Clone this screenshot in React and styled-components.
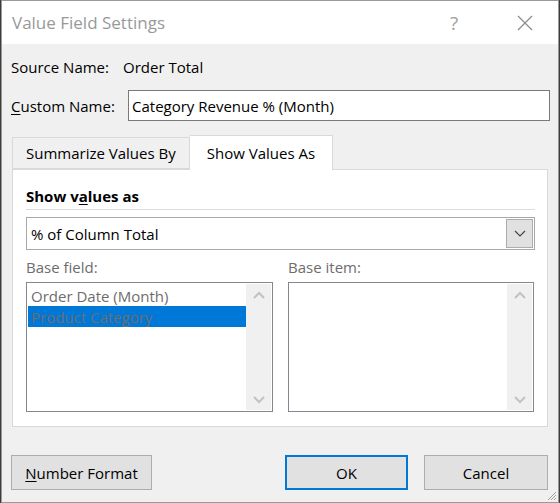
import styled, { createGlobalStyle } from "styled-components";

const GlobalStyle = createGlobalStyle`
  html, body {
    margin: 0;
    padding: 0;
    background: #3c3c3c;
  }
  body {
    font-family: "Open Sans", "Noto Sans", sans-serif;
    font-size: 15px;
    color: #000;
  }
`;

const Window = styled.div`
  box-sizing: border-box;
  margin-left: 1px;
  width: 558px;
  height: 503px;
  border: 1px solid #9a9a9a;
  background: #f0f0f0;
  display: flex;
  flex-direction: column;
  position: relative;
`;

const TitleBar = styled.div`
  height: 43px;
  background: #fff;
  display: flex;
  align-items: center;
  padding-left: 10px;
`;

const Title = styled.div`
  flex: 1;
  font-size: 17px;
  color: #999;
  padding-bottom: 1px;
`;

const TitleButton = styled.div`
  width: ${({ $w }) => $w}px;
  height: 43px;
  display: flex;
  align-items: center;
  justify-content: center;
  color: #a0a0a0;
  font-size: 19px;
`;

const Body = styled.div`
  flex: 1;
  display: flex;
  flex-direction: column;
  padding: 13px 8px 0 9px;
`;

const Row = styled.div`
  display: flex;
  align-items: center;
  height: ${({ $h }) => $h}px;
  margin-top: ${({ $mt }) => $mt || 0}px;
`;

const Label = styled.span`
  width: ${({ $w }) => $w}px;
  white-space: nowrap;
`;

const U = styled.span`
  text-decoration: underline;
  text-underline-offset: 2px;
`;

const TextInput = styled.div`
  flex: 1;
  box-sizing: border-box;
  height: 31px;
  border: 1px solid #7a7a7a;
  background: #fff;
  display: flex;
  align-items: center;
  padding-left: 3px;
`;

const Tabs = styled.div`
  display: flex;
  align-items: flex-end;
  margin-top: 14px;
  margin-left: 1px;
  height: 34px;
`;

const Tab = styled.div`
  box-sizing: border-box;
  height: ${({ $active }) => ($active ? 35 : 32)}px;
  margin-bottom: ${({ $active }) => ($active ? -1 : 0)}px;
  padding: 0 ${({ $pad }) => $pad}px;
  background: ${({ $active }) => ($active ? "#fff" : "#f0f0f0")};
  border: 1px solid #d9d9d9;
  border-bottom: ${({ $active }) => ($active ? "none" : "1px solid #d9d9d9")};
  border-left: ${({ $noLeft }) => ($noLeft ? "none" : "1px solid #d9d9d9")};
  display: flex;
  align-items: center;
  white-space: nowrap;
  position: relative;
  z-index: ${({ $active }) => ($active ? 1 : 0)};
`;

const Panel = styled.div`
  box-sizing: border-box;
  margin-left: 1px;
  width: 536px;
  height: 258px;
  background: #fff;
  border: 1px solid #d9d9d9;
  padding: 12px 12px 0 13px;
  display: flex;
  flex-direction: column;
`;

const SectionTitle = styled.div`
  font-weight: 700;
  height: 27px;
  display: flex;
  align-items: center;
  border-bottom: 1px solid #dcdcdc;
`;

const Combo = styled.div`
  box-sizing: border-box;
  margin-top: 7px;
  height: 33px;
  border: 1px solid #a8a8a8;
  display: flex;
  align-items: center;
  padding: 0 1px 0 4px;
`;

const ComboText = styled.div`
  flex: 1;
`;

const ComboButton = styled.div`
  box-sizing: border-box;
  width: 27px;
  height: 29px;
  background: #e1e1e1;
  border: 1px solid #adadad;
  display: flex;
  align-items: center;
  justify-content: center;
`;

const Columns = styled.div`
  display: grid;
  grid-template-columns: 247px 246px;
  column-gap: 15px;
  margin-top: 5px;
`;

const Column = styled.div`
  display: flex;
  flex-direction: column;
`;

const DisabledLabel = styled.div`
  color: #6d6d6d;
  height: 24px;
  display: flex;
  align-items: center;
`;

const ListBox = styled.div`
  box-sizing: border-box;
  height: 130px;
  margin-top: 3px;
  border: 1px solid #828790;
  background: #fff;
  display: flex;
  padding: 1px;
`;

const Items = styled.div`
  flex: 1;
  display: flex;
  flex-direction: column;
  padding-top: 1px;
`;

const Item = styled.div`
  height: 21px;
  display: flex;
  align-items: center;
  padding-left: 3px;
  white-space: nowrap;
  color: #6d6d6d;
  background: ${({ $selected }) => ($selected ? "#0078d7" : "transparent")};
`;

const ScrollBar = styled.div`
  width: 25px;
  background: #f0f0f0;
  display: flex;
  flex-direction: column;
  justify-content: space-between;
  align-items: center;
  padding: 7px 0 6px;
`;

const Footer = styled.div`
  display: flex;
  margin-top: 28px;
`;

const Button = styled.div`
  box-sizing: border-box;
  width: ${({ $w }) => $w}px;
  height: 35px;
  margin-left: ${({ $ml }) => $ml || 0}px;
  background: #e1e1e1;
  border: ${({ $default }) => ($default ? "2px solid #0078d7" : "1px solid #adadad")};
  display: flex;
  align-items: center;
  justify-content: center;
  white-space: nowrap;
`;

const Grip = styled.svg`
  position: absolute;
  right: 1px;
  bottom: 1px;
`;

const Chevron = ({ up, color = "#c2c2c2" }) => (
  <svg width="12" height="8" viewBox="0 0 12 8">
    <path
      d={up ? "M1 7 L6 2 L11 7" : "M1 1 L6 6 L11 1"}
      fill="none"
      stroke={color}
      strokeWidth="2"
    />
  </svg>
);

export default function App() {
  return (
    <>
      <GlobalStyle />
      <Window>
        <TitleBar>
          <Title>Value Field Settings</Title>
          <TitleButton $w={76}>?</TitleButton>
          <TitleButton $w={66}>
            <svg width="16" height="16" viewBox="0 0 16 16">
              <path d="M1 1 L15 15 M15 1 L1 15" stroke="#8a8a8a" strokeWidth="1.2" />
            </svg>
          </TitleButton>
        </TitleBar>
        <Body>
          <Row $h={20}>
            <Label $w={112}>Source Name:</Label>
            <span>Order Total</span>
          </Row>
          <Row $h={31} $mt={13}>
            <Label $w={117}>
              <U>C</U>ustom Name:
            </Label>
            <TextInput>Category Revenue % (Month)</TextInput>
          </Row>
          <Tabs>
            <Tab $pad={13}>Summarize Values By</Tab>
            <Tab $active $pad={17} $noLeft>
              Show Values As
            </Tab>
          </Tabs>
          <Panel>
            <SectionTitle>
              <span>
                Show v<U>a</U>lues as
              </span>
            </SectionTitle>
            <Combo>
              <ComboText>% of Column Total</ComboText>
              <ComboButton>
                <svg width="12" height="8" viewBox="0 0 12 8">
                  <path d="M1 1 L6 6 L11 1" fill="none" stroke="#444" strokeWidth="1.2" />
                </svg>
              </ComboButton>
            </Combo>
            <Columns>
              <Column>
                <DisabledLabel>Base field:</DisabledLabel>
                <ListBox>
                  <Items>
                    <Item>Order Date (Month)</Item>
                    <Item $selected>Product Category</Item>
                  </Items>
                  <ScrollBar>
                    <Chevron up />
                    <Chevron />
                  </ScrollBar>
                </ListBox>
              </Column>
              <Column>
                <DisabledLabel>Base item:</DisabledLabel>
                <ListBox>
                  <Items />
                  <ScrollBar>
                    <Chevron up />
                    <Chevron />
                  </ScrollBar>
                </ListBox>
              </Column>
            </Columns>
          </Panel>
          <Footer>
            <Button $w={141}>
              <span>
                <U>N</U>umber Format
              </span>
            </Button>
            <Button $w={123} $ml={133} $default>
              OK
            </Button>
            <Button $w={124} $ml={16}>
              Cancel
            </Button>
          </Footer>
        </Body>
        <Grip width="12" height="12" viewBox="0 0 12 12">
          <path d="M11 3 L3 11 M11 6 L6 11 M11 9 L9 11" stroke="#a0a0a0" strokeWidth="1" />
        </Grip>
      </Window>
    </>
  );
}
